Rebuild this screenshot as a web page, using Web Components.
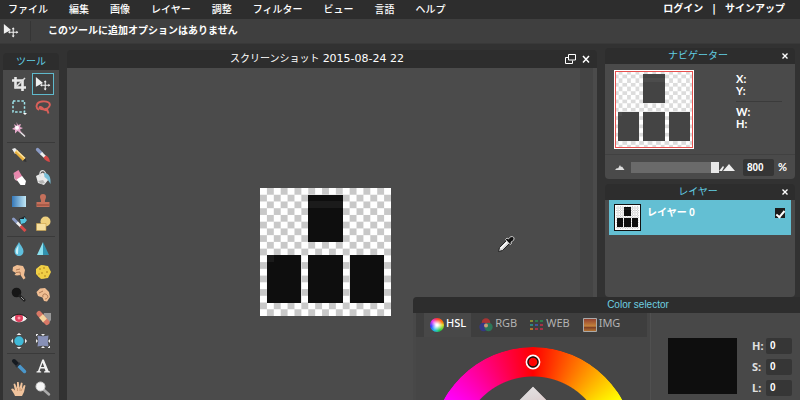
<!DOCTYPE html>
<html lang="ja">
<head>
<meta charset="utf-8">
<title>スクリーンショット 2015-08-24 22</title>
<style>
  html, body { margin: 0; height: 100%; overflow: hidden; background: #323232; }
  body { font: 10px/14px "DejaVu Sans", "Noto Sans CJK JP", sans-serif; color: #fff; }
  time { font-size: 11px; font-family: "DejaVu Sans", sans-serif; }
</style>
</head>
<body>
<editor-app>
  <menu-bar slot="menu">
    <menu-item>ファイル</menu-item><menu-item>編集</menu-item><menu-item>画像</menu-item><menu-item>レイヤー</menu-item><menu-item>調整</menu-item><menu-item>フィルター</menu-item><menu-item>ビュー</menu-item><menu-item>言語</menu-item><menu-item>ヘルプ</menu-item>
    <account-links slot="account"></account-links>
  </menu-bar>
  <options-bar slot="options">このツールに追加オプションはありません</options-bar>
  <tool-box slot="tools"></tool-box>
  <document-window slot="document">
    <span slot="title">スクリーンショット <time>2015-08-24 22</time></span>
    <pixel-art></pixel-art>
  </document-window>
  <side-panel slot="panels" heading="ナビゲーター"><navigator-view></navigator-view></side-panel>
  <side-panel slot="panels" heading="レイヤー"><layer-list><layer-row>レイヤー 0</layer-row></layer-list></side-panel>
  <color-selector slot="floating"></color-selector>
</editor-app>

<script>
const define = (name, html, setup) => {
  const template = document.createElement('template');
  template.innerHTML = '<style>:host,*{box-sizing:border-box}button,input{font:inherit;color:inherit;border:0;margin:0;padding:0;background:none}svg{display:block}</style>' + html;
  customElements.define(name, class extends HTMLElement {
    constructor() {
      super();
      this.attachShadow({ mode: 'open' }).append(template.content.cloneNode(true));
    }
    connectedCallback() { if (setup) setup(this, this.shadowRoot); }
  });
};

const moveIcon = '<path fill="#f0f0f0" d="M1 1v11l8-4z"/><path stroke="#eee" fill="none" stroke-width="1.2" d="M11.500 5.500v10M6.500 10.500h10"/><path fill="#eee" d="M9.800 7l1.700-2.200L13.200 7zM9.800 14l1.700 2.200 1.700-2.200zM15 8.800l2.200 1.700L15 12.200zM8 8.800l-2.200 1.700L8 12.200z"/>';

const icons = {
  crop: '<path fill="none" stroke="#e8e8e8" stroke-width="2.600" d="M4.500 1v10.500H15M1 4.500h10.500V15"/><path stroke="#ddd" stroke-width="1.400" d="M4 12L14 2"/>',
  move: moveIcon,
  marquee: '<path fill="none" stroke="#9fe3ea" stroke-width="1.500" stroke-dasharray="2.500 1.700" d="M2 2h11.500v11H2z"/><path fill="#fff" d="M12 14h4l-2 2z"/>',
  lasso: '<path fill="none" stroke="#d9605a" stroke-width="1.900" d="M4 11C0 9 1 3 7 2.500c5-.5 9 1 7.500 4.500C13 10.500 7 11 5 9.500 3.500 8 6 7 7.500 9c1.500 2.500 3 2.500 5 2M12 10l1.500 4.500"/>',
  wand: '<path stroke="#6a5a62" stroke-width="2" d="M7 7l7 7"/><path stroke="#eee" stroke-width="1.200" d="M8 9l6 5.500"/><path fill="#e6a9cb" d="M5.500 0L7 3l3-1-1 3 3 1-3 1.500L10 11 6.500 9 4 11.500 4 8 1 7l3-2-1-3 3 2 1z"/><circle cx="6" cy="5.700" r="2" fill="#fff"/>',
  pencil: '<path fill="#eee" d="M1 2l3-1 3 3-3 3z"/><path fill="#e9b13d" d="M3.500 5.500L6 3l8.500 8-2.500 3z"/><path fill="#fae1a0" d="M5 4l1-1 8.500 8-1 1z"/><path fill="#333" d="M12 14l2.500-3 1 4z"/>',
  brush: '<path stroke="#8b9bc5" stroke-width="3.200" stroke-linecap="round" d="M2.500 2.500l4 4"/><path stroke="#eee" stroke-width="3" d="M6 6l4 4"/><path fill="#d84a48" d="M8.500 10.500l2.500-2c2 1 3.500 3 4 6.500-3-.5-5.500-2-6.500-4.500z"/>',
  eraser: '<path fill="#e887ad" d="M2.500 3l5-3 4 7-6 4z"/><path fill="#f6c6d8" d="M2.500 3l1 6 2 2z"/><path fill="#fff" d="M5.500 9.500L11 6l4 5-1 4H9.500z"/>',
  bucket: '<path fill="#e9e9e9" d="M1 6l7-3.500 6 6.500-5 6-6-2z"/><path fill="none" stroke="#ddd" stroke-width="1.300" d="M5 7c-1-8 5-8 6-2"/><path fill="#b5b5b5" d="M3 11l3 3 4-1-2-3z"/><path fill="#79bfd8" d="M9 3c5 0 7 4 6.500 11C14 12 13 9 9.500 7z"/>',
  gradient: '<defs><linearGradient id="g"><stop stop-color="#3477b8"/><stop offset="1" stop-color="#c3e9f6"/></linearGradient></defs><path fill="url(#g)" d="M1 3h14v11H1z"/>',
  stamp: '<path fill="#c5705b" d="M5 4a3 3 0 0 1 6 0c0 2-1.500 3-1 5h4.500v5h-13V9H6c.5-2-1-3-1-5z"/><path stroke="#8d4637" d="M2 12h12"/>',
  replace: '<path stroke="#8b9bc5" stroke-width="3" stroke-linecap="round" d="M2.500 3l4 4"/><path stroke="#eee" stroke-width="2.500" d="M6 6.500l4 4"/><path stroke="#d84a48" stroke-width="3" d="M9.500 10l5 5"/><path fill="#1d252a" d="M8 3l6-3 1 7-4 1z"/><path fill="#54c4df" d="M9 3h4V1l3 3-2 3-4 1z"/>',
  shape: '<circle cx="10.500" cy="5.500" r="5" fill="#efd07e"/><path fill="#f6df9f" stroke="#c99f45" stroke-width=".6" d="M1.500 7.500H11v7H1.500z"/>',
  drop: '<path fill="#5fbfdd" d="M8 1c2 4 4.500 6 4.500 9.500a4.500 4.500 0 0 1-9 0C3.500 7 6 5 8 1z"/><path fill="#c9f1fa" d="M7.500 4C6 7 4.500 8 4.800 11 5 13 6.500 13.500 7 13z"/>',
  sharpen: '<path fill="#8be0ee" d="M8 1v13L2 14z"/><path fill="#3192ae" d="M8 1l6 13H8z"/>',
  smudge: '<path fill="#efbd92" d="M2 3l4-2 6 1 2 4-1 5 1.500 3-2 1.500L9.500 11 6 11.500 3.500 11 5 9 1.500 7z"/><path stroke="#9c6746" stroke-width=".8" fill="none" d="M5 6l4-1M5 8.500l4-.5M9.500 11L9 8"/>',
  sponge: '<circle cx="8" cy="8" r="6.500" fill="#f0cf45"/><path fill="#f0cf45" d="M1 5l5-4 7 1 3 6-3 6-7 1-5-5z"/><g fill="#c49a28"><circle cx="5" cy="5" r="1"/><circle cx="9" cy="4" r="1"/><circle cx="12" cy="8" r="1"/><circle cx="7" cy="9" r="1"/><circle cx="10" cy="12" r="1"/><circle cx="4" cy="10" r=".8"/></g>',
  dodge: '<circle cx="5.500" cy="5.500" r="4.800" fill="#161616"/><path stroke="#222" stroke-width="2.500" d="M8 8l6 6"/><path stroke="#999" d="M10 10l3 3"/>',
  burn: '<path fill="#efbd92" d="M1.500 5L5 1.500 10 1l4 4 1 5-3 4.500L9 14 7.500 10.500 3 9z"/><path stroke="#9c6746" stroke-width=".8" fill="none" d="M4 6l4-2M8 10c-1-3 2-4 4-2s0 4-2 4"/>',
  redeye: '<path fill="#f5f5f5" d="M0 8.500C4 3.500 12 3.500 16 8.500 12 13.500 4 13.500 0 8.500z"/><circle cx="8" cy="8" r="4" fill="#df3f5d"/><circle cx="8" cy="8" r="1.500" fill="#ff9bac"/><path fill="none" stroke="#222" d="M0 8c4-5 12-5 16 0"/>',
  heal: '<path fill="#999" d="M9 3h7v7l-3 4-6-2z"/><path stroke="#d97866" stroke-width="5" stroke-linecap="round" d="M4 3.500l8 9"/><path stroke="#f5d49d" stroke-width="5" d="M6 6l4 4.500"/>',
  bloat: '<circle cx="8" cy="8" r="4.700" fill="#40b9d7"/><path fill="#eee" d="M5.500 2L8 0l2.500 2zM5.500 14L8 16l2.500-2zM2 5.500L0 8l2 2.500zM14 5.500L16 8l-2 2.500z"/>',
  pinch: '<path fill="#8790b6" d="M2.500 2.500q5.500 1.500 11 0-1.500 5.500 0 11-5.500-1.500-11 0 1.500-5.500 0-11z"/><path fill="#eee" d="M6 1h4L8 3zM6 15h4l-2-2zM1 6v4l2-2zM15 6v4l-2-2zM1 1h2v1H2v1H1zM15 15h-2v-1h1v-1h1z"/>',
  picker: '<path stroke="#151a20" stroke-width="4" stroke-linecap="round" d="M3 3l4 4"/><path stroke="#4a97cb" stroke-width="3.500" stroke-linecap="round" d="M8 8l5.500 5.500"/><path stroke="#2a3038" stroke-width="2" d="M5 9l4-4"/>',
  type: '<path fill="#f2f2f2" fill-rule="evenodd" d="M7.300 1.500h1.500L13.600 13l1.400.5v1H9v-1l1.500-.5-.9-2.500H5.500L4.700 13l1.500.5v1H1.500v-1L3 13zM6 9h3.200L7.600 4.700z"/>',
  hand: '<path fill="#f0c39c" d="M4 15C3 12 1 10 0 8l2-.5 2 2L2.500 3 4 2.500 6 7 6 1h1.700l.8 6L10 1.500l1.600.5-.6 6 2-4 1.500.6L13 11l-2 4z"/><path stroke="#b57c55" stroke-width=".6" d="M6.500 7v3M9 7v3M11 8l-1 2"/>',
  zoom: '<path stroke="#aaa" stroke-width="2.500" stroke-linecap="round" d="M9 9l5 4.500"/><circle cx="5.500" cy="5.500" r="4.500" fill="#f5f5f5" stroke="#ccc"/>'
};

define('editor-app', `
  <style>
    :host { display: flex; flex-direction: column; height: 100vh; overflow: hidden; position: relative; }
    main { flex: 1; min-height: 0; display: grid; grid-template-columns: 56px minmax(0,1fr) 190px; gap: 8px; padding: 4px 5px 0 3px; }
    aside { display: flex; flex-direction: column; gap: 5px; }
  </style>
  <slot name="menu"></slot><slot name="options"></slot>
  <main><slot name="tools"></slot><slot name="document"></slot><aside><slot name="panels"></slot></aside></main>
  <slot name="floating"></slot>`);

define('menu-bar', `
  <style>
    :host { display: flex; justify-content: space-between; height: 19px; background: #2d2d2d; font-weight: 500; }
    nav { display: flex; gap: 21px; padding: 3px 0 0 8px; }
  </style>
  <nav><slot></slot></nav><slot name="account"></slot>`);

define('menu-item', `
  <style>:host { display: block } button { display: block; line-height: 14px; white-space: nowrap; }</style>
  <button type="button"><slot></slot></button>`);

define('account-links', `
  <style>
    :host { display: flex; gap: 9px; padding: 2px 15px 0 0; font-weight: 700; }
    a { color: inherit; text-decoration: none; }
  </style>
  <a href="#login">ログイン</a><span>|</span><a href="#signup">サインアップ</a>`);

define('options-bar', `
  <style>
    :host { display: flex; align-items: center; height: 25px; background: #3f3f3f; font-weight: 700; border-bottom: 1px solid #393939; }
    svg { margin: 0 11px 0 3px; }
    span { border-left: 1px solid #353535; padding-left: 17px; line-height: 20px; }
  </style>
  <svg width="16" height="16" viewBox="0 0 18 18">${moveIcon}</svg><span><slot></slot></span>`);

define('tool-button', `
  <style>
    :host { display: block; }
    button { display: grid; place-items: center; width: 22px; height: 22px; border: 1px solid transparent; }
    :host([active]) button { border-color: #5fb9cc; background: #404040; }
  </style>
  <button type="button"><svg width="16" height="16"></svg></button>`, (host, root) => {
    const svg = root.querySelector('svg'), name = host.getAttribute('icon');
    svg.innerHTML = icons[name];
    svg.setAttribute('viewBox', name === 'move' ? '0 0 18 18' : '0 0 16 16');
    root.querySelector('button').setAttribute('aria-label', name);
  });

const tools = [
  ['crop', 'move', 'marquee', 'lasso', 'wand'],
  ['pencil', 'brush', 'eraser', 'bucket', 'gradient', 'stamp', 'replace', 'shape'],
  ['drop', 'sharpen', 'smudge', 'sponge', 'dodge', 'burn', 'redeye', 'heal', 'bloat', 'pinch'],
  ['picker', 'type', 'hand', 'zoom']
];
define('tool-box', `
  <style>
    :host { display: flex; flex-direction: column; padding-top: 5px; }
    h2 { margin: 0; background: #2d2d2d; color: #62cfe4; font-size: 10px; font-weight: 400; text-align: center; height: 17px; line-height: 17px; border-radius: 4px 4px 0 0; }
    .body { flex: 1; background: #4a4a4a; padding: 2px 4px; overflow: hidden; }
    .group { display: grid; grid-template-columns: 24px 24px; grid-auto-rows: 23px; place-items: center; }
    .group + .group { border-top: 1px solid #3a3a3a; margin-top: 1px; }
  </style>
  <h2>ツール</h2>
  <div class="body">${tools.map(g => `<div class="group">${g.map(t => `<tool-button icon="${t}"${t === 'move' ? ' active' : ''}></tool-button>`).join('')}</div>`).join('')}</div>`);

define('document-window', `
  <style>
    :host { display: flex; flex-direction: column; padding-top: 2px; min-width: 0; }
    header { display: grid; grid-template-columns: 1fr 30px; align-items: center; height: 18px; background: #2d2d2d; border-radius: 4px 4px 0 0; text-align: center; }
    .buttons { display: flex; gap: 6px; justify-content: end; padding-right: 7px; }
    button { display: block; }
    .view { flex: 1; display: grid; grid-template-columns: 1fr 13px 4px; background: #4b4b4b; position: relative; overflow: hidden; }
    .stage { padding: 120px 0 0 4px; display: grid; justify-items: center; align-content: start; }
    .bar { background: #444; }
    ::slotted(pixel-art) { width: 131px; height: 128px; }
    .cursor { position: absolute; left: 430px; top: 167px; }
  </style>
  <header><slot name="title"></slot>
    <div class="buttons">
      <button type="button" aria-label="restore"><svg width="11" height="10" fill="none" stroke="#fff"><path d="M3.500 .5h7v5.500h-7zM3 3.500H.5v6h7V6.500"/></svg></button>
      <button type="button" aria-label="close"><svg width="8" height="10" fill="none" stroke="#fff" stroke-width="1.500"><path d="M1 2l6 6.500M7 2L1 8.500"/></svg></button>
    </div>
  </header>
  <div class="view"><div class="stage"><slot></slot></div><div class="bar"></div>
    <svg class="cursor" width="18" height="18" viewBox="0 0 18 18"><path fill="#d8d8d8" stroke="#222" d="M1.500 16.500l1-4L10 5l3 3-7.500 7.500z"/><path stroke="#fff" stroke-width="1.200" d="M3.500 13.500L10 7"/><path fill="#111" stroke="#eee" stroke-width=".8" d="M8.500 4.500L10 3l1.500 1C13 .5 17.500 1 17 4c-.3 2-2 2.500-3 3l.5 1.500-1.500 1z"/></svg>
  </div>`);

/* Transparent image of four blocks on a 19 x 19 grid */
define('pixel-art', `
  <style>:host { display: block; } svg { width: 100%; height: 100%; }</style>
  <svg viewBox="0 0 19 19" preserveAspectRatio="none" shape-rendering="crispEdges">
    <defs><pattern id="c" width="2" height="2" patternUnits="userSpaceOnUse"><path fill="#fff" d="M0 0h2v2H0z"/><path fill="var(--check,#c8c8c8)" d="M1 0h1v1H1zM0 1h1v1H0z"/></pattern></defs>
    <path fill="url(#c)" d="M0 0h19v19H0z"/>
    <path fill="var(--block,#0e0e0e)" d="M7 1h5v7H7zM1 10h5v7H1zM7 10h5v7H7zM13 10h5v7h-5z"/>
    <path fill="var(--tint,#1b1b1b)" d="M7 2h5v1H7zM1 10h1v1H1z"/>
  </svg>`);

define('side-panel', `
  <style>
    :host { display: block; }
    header { display: grid; grid-template-columns: 16px 1fr 20px; background: #2d2d2d; height: 16px; align-items: center; border-radius: 4px 4px 0 0; }
    h2 { margin: 0; font-size: 10px; font-weight: 400; color: #62cfe4; text-align: center; line-height: 16px; }
    button { justify-self: center; }
    section { background: #4a4a4a; border-radius: 0 0 4px 4px; }
  </style>
  <header><span></span><h2></h2><button type="button" aria-label="close"><svg width="6" height="6" stroke="#fff" stroke-width="1.400"><path d="M.5 .5l5 5M5.500 .5l-5 5"/></svg></button></header>
  <section><slot></slot></section>`, (host, root) => { root.querySelector('h2').textContent = host.getAttribute('heading'); });

define('navigator-view', `
  <style>
    :host { display: block; }
    .top { display: flex; gap: 42px; padding: 6px 13px 0 9px; height: 90px; }
    .thumb { position: relative; width: 80px; height: 79px; --check: #dcdcdc; --block: #444; --tint: #4c4c4c; }
    .thumb::after { content: ""; position: absolute; inset: 1px; border: 1px solid #e8514f; outline: 1px solid #fff; }
    pixel-art { width: 100%; height: 100%; }
    .info { flex: 1; font: 700 11px/12px Lato, sans-serif; padding-top: 3px; }
    .info div + div { border-top: 1px solid #3b3b3b; margin-top: 4px; padding-top: 4px; }
    .info span { display: block; }
    .zoom { display: flex; align-items: center; height: 25px; border-top: 1px solid #414141; padding: 0 8px 0 10px; }
    .range { flex: 1; min-width: 0; height: 11px; margin: 0 0 0 6px; appearance: none; background: #6a6a6a; }
    .range::-webkit-slider-thumb { appearance: none; width: 8px; height: 11px; background: #e8e8e8; }
    .big { margin-right: 8px; }
    .value { width: 31px; height: 17px; background: #353535; border-radius: 2px; padding-left: 4px; font-family: "Liberation Sans", sans-serif; font-weight: 700; }
    label { font: 700 11px/16px Lato, sans-serif; margin-left: 4px; }
  </style>
  <div class="top"><div class="thumb"><pixel-art></pixel-art></div>
    <div class="info"><div><span>X:</span><span>Y:</span></div><div><span>W:</span><span>H:</span></div></div></div>
  <div class="zoom">
    <svg width="10" height="5" fill="#ddd"><path d="M0 5l2-2 1 .5L5 0l1 2 1-.5L9.500 5z"/></svg>
    <input class="range" type="range" min="0" max="800" value="800" aria-label="zoom">
    <svg class="big" width="16" height="8" fill="#eee"><path d="M0 8l4-5 1 1-2 4zM4 8l6-7 6 7z"/></svg>
    <input class="value" id="z" value="800"><label for="z">%</label>
  </div>`);

define('layer-list', `
  <style>:host { display: block; padding: 0 4px; min-height: 97px; }</style><slot></slot>`);

define('layer-row', `
  <style>
    :host { display: flex; gap: 6px; height: 35px; background: #63bfd3; padding: 4px 6px 4px 5px; font: 700 10px/16px "Noto Sans CJK JP", sans-serif; }
    .thumb { width: 27px; height: 27px; border: 1px solid #111; padding: 1px; background: #fff; }
    pixel-art { height: 100%; }
    label { flex: 1; }
    input { appearance: none; width: 10px; height: 10px; margin-top: 4px; background: #1c1c1c; display: grid; place-items: center; }
    input:checked::after { content: ""; width: 7px; height: 3px; border: solid #fff; border-width: 0 0 2px 2px; rotate: -50deg; }
  </style>
  <div class="thumb"><pixel-art></pixel-art></div><label for="v"><slot></slot></label><input id="v" type="checkbox" checked>`);

define('color-tab', `
  <style>
    :host { display: block; }
    button { display: flex; align-items: center; gap: 2px; height: 24px; padding: 0 5px 0 6px; font: 400 11px/20px "Noto Sans", sans-serif; color: #b2b2b2; }
    :host([active]) button { background: #484848; color: #fff; font-weight: 500; }
    span { padding-bottom: 4px; }
  </style>
  <button type="button" role="tab"><slot name="icon"></slot><span><slot></slot></span></button>`);

define('channel-field', `
  <style>
    :host { display: flex; justify-content: space-between; align-items: center; height: 16px; width: 40px; }
    label { font: 700 11px/16px "Noto Sans", sans-serif; color: #e0e0e0; }
    input { width: 26px; height: 16px; padding: 0 0 2px 4px; background: #363636; border-radius: 2px; font: 700 10px/14px "Liberation Sans", sans-serif; }
  </style>
  <label for="i"></label><input id="i" value="0">`, (host, root) => { root.querySelector('label').textContent = host.getAttribute('channel') + ':'; });

/* Floating window that reaches past the right edge of the workspace */
define('color-selector', `
  <style>
    :host { position: absolute; left: 413px; top: 297px; width: 450px; background: #484848; border-radius: 4px 4px 0 0; }
    h2 { margin: 0; background: #2d2d2d; color: #6fd0e2; font: 400 10px/16px "Liberation Sans", sans-serif; text-align: center; border-radius: 4px 4px 0 0; }
    .body { display: grid; grid-template-columns: 235px 1fr; padding-left: 3px; }
    .left { background: #464646; border-right: 1px solid #505050; }
    .tabs { display: flex; gap: 2px; background: #3e3e3e; padding-left: 8px; margin-right: 3px; height: 24px; }
    .wheel { position: relative; width: 204px; height: 204px; margin: 10px auto 12px; display: grid; place-items: center; }
    .ring { position: absolute; inset: 0; border-radius: 50%; background: conic-gradient(red, #ff0 60deg, #0f0 120deg, #0ff 180deg, #00f 240deg, #f0f 300deg, red); mask: radial-gradient(circle, transparent 72px, #000 73px); }
    .square { width: 88px; height: 88px; rotate: 45deg; background: linear-gradient(to bottom right, #e4dfe0, transparent 50%), linear-gradient(to right, #bbb, red); }
    .knob { position: absolute; top: 7px; left: 94px; }
    .right { display: flex; gap: 15px; padding: 25px 0 0 17px; align-items: start; }
    .swatch { width: 69px; height: 56px; background: #0e0e0e; }
    .fields { display: grid; gap: 5px; }
    .sphere { width: 14px; height: 14px; border-radius: 50%; background: radial-gradient(circle, #fff 10%, transparent 60%), conic-gradient(#f33, #f70 60deg, #dd2 90deg, #2c4 150deg, #2be 210deg, #33f 260deg, #e3e 310deg, #f33); }
  </style>
  <h2>Color selector</h2>
  <div class="body">
    <div class="left">
      <div class="tabs" role="tablist">
        <color-tab active><div slot="icon" class="sphere"></div>HSL</color-tab>
        <color-tab><svg slot="icon" width="14" height="14"><circle cx="7" cy="4.500" r="4.200" fill="#a73434"/><circle cx="4.500" cy="9" r="4.200" fill="#343884"/><circle cx="9.500" cy="9" r="4.200" fill="#2d7659"/><circle cx="7" cy="7.500" r="2" fill="#c89b78"/></svg>RGB</color-tab>
        <color-tab><svg slot="icon" width="14" height="11"><path fill="#8a8a35" d="M0 0h3v2H0z"/><path fill="#2d7b4b" d="M5 0h3v2H5zM10 0h3v2h-3z"/><path fill="#42539e" d="M5 4h3v2H5z"/><path fill="#2c8680" d="M0 4h3v2H0z"/><path fill="#a33247" d="M10 4h3v2h-3zM5 8h3v2H5zM10 8h3v2h-3z"/><path fill="#b0762d" d="M0 8h3v2H0z"/></svg>WEB</color-tab>
        <color-tab><svg slot="icon" width="14" height="14"><defs><linearGradient id="s" x2="0" y2="1"><stop stop-color="#8f3d2e"/><stop offset=".6" stop-color="#c6843c"/><stop offset=".65" stop-color="#7a3b24"/><stop offset="1" stop-color="#b87832"/></linearGradient></defs><path fill="url(#s)" stroke="#aaa" d="M.5 .5h13v13H.5z"/></svg>IMG</color-tab>
      </div>
      <div class="wheel"><div class="ring"></div><div class="square"></div>
        <svg class="knob" width="16" height="16" fill="none"><circle cx="8" cy="8" r="6.500" stroke="#fff" stroke-width="1.800"/><circle cx="8" cy="8" r="5" stroke="#111" stroke-width="1.300"/></svg></div>
    </div>
    <div class="right"><div class="swatch"></div>
      <div class="fields"><channel-field channel="H"></channel-field><channel-field channel="S"></channel-field><channel-field channel="L"></channel-field></div></div>
  </div>`);
</script>
</body>
</html>
